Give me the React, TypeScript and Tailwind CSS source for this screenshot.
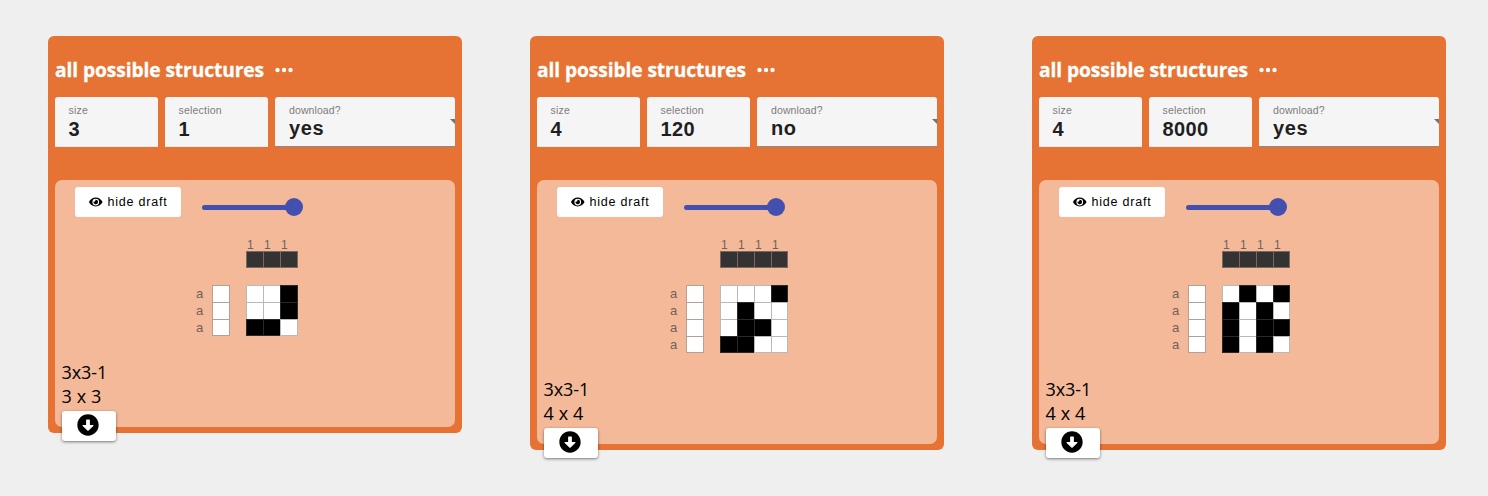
import { FaArrowAltCircleDown, FaEye } from "react-icons/fa";

type Structure = {
  size: number;
  selection: string;
  download: string;
  rows: string[];
};

const structures: Structure[] = [
  { size: 3, selection: "1", download: "yes", rows: ["001", "001", "110"] },
  { size: 4, selection: "120", download: "no", rows: ["0001", "0100", "0110", "1100"] },
  { size: 4, selection: "8000", download: "yes", rows: ["0101", "1010", "1011", "1010"] },
];

function Field({ label, value }: { label: string; value: string }) {
  return (
    <div className="h-[50px] w-[103px] rounded-t-[3px] border-b border-[#f0e8e4] bg-[#f5f5f5] pl-[13.5px] pt-[6px]">
      <div className="h-[14px] text-[10.5px] leading-[14px] tracking-[0.2px] text-[#7c7c7c]">{label}</div>
      <div className="text-[20px] font-bold leading-[24px] tracking-[0.4px] text-[#1f1f1f]">{value}</div>
    </div>
  );
}

function SelectField({ label, value }: { label: string; value: string }) {
  return (
    <div className="flex h-[50px] w-[180px] items-start justify-between overflow-hidden rounded-t-[3px] border-b border-[#8a8a8a] bg-[#f5f5f5] pl-[14px] pt-[6px]">
      <div>
        <div className="h-[14px] text-[10.5px] leading-[14px] tracking-[0.1px] text-[#7c7c7c]">{label}</div>
        <div className="text-[20px] font-bold leading-[22px] tracking-[0.6px] text-[#1f1f1f]">{value}</div>
      </div>
      <svg className="mt-[16px] h-[5px] w-[5px]" viewBox="0 0 5 5">
        <path d="M0 0H5V5Z" fill="#737373" />
      </svg>
    </div>
  );
}

function Draft({ rows }: { rows: string[] }) {
  const n = rows.length;
  return (
    <div className={n === 3 ? "pl-[141px]" : "pl-[133px]"}>
      <div className="flex h-[14px] pl-[50px]">
        {rows.map((_, i) => (
          <span key={i} className="w-[17px] pl-[1px] text-[12px] leading-[16px] text-[#6f625b]">1</span>
        ))}
      </div>
      <div className="flex pl-[50px]">
        {rows.map((_, i) => (
          <span
            key={i}
            className={`-mr-px h-[17px] border border-[#7d675d] bg-[#333333] ${n === 4 && i === 3 ? "w-[17px]" : "w-[18px]"}`}
          />
        ))}
      </div>
      <div className="mt-[17px]">
        {rows.map((row, i) => {
          const height = i === n - 1 ? "h-[17px]" : "h-[18px]";
          return (
            <div key={i} className="flex h-[17px]">
              <span className="w-[16px] text-[13px] leading-[17px] text-[#6f625b]">a</span>
              <span className={`mr-[16px] w-[18px] border border-[#b3a197] bg-white ${height}`} />
              {row.split("").map((cell, j) => (
                <span
                  key={j}
                  className={`-mr-px border ${height} ${n === 4 && j === 3 ? "w-[17px]" : "w-[18px]"} ${
                    cell === "1" ? "border-[#333333]/80 bg-black" : "border-[#a8a8a8]/80 bg-white"
                  }`}
                />
              ))}
            </div>
          );
        })}
      </div>
    </div>
  );
}

function StructureCard({ item }: { item: Structure }) {
  return (
    <section className={`w-[414px] rounded-[6px] bg-[#e67333] px-[7px] ${item.size === 3 ? "h-[397px]" : "h-[414px]"}`}>
      <header className="flex h-[61px] items-center gap-[11px] pt-[7px] text-white">
        <h2 className="w-[209px] whitespace-nowrap font-['Open_Sans',sans-serif] text-[19.2px] font-bold leading-[28px] tracking-[-0.09px] [-webkit-text-stroke:0.3px_white]">
          all possible structures
        </h2>
        <svg className="h-[6px] w-[18px]" viewBox="0 0 18 6" fill="currentColor">
          <circle cx="2.5" cy="3" r="2.2" />
          <circle cx="9" cy="3" r="2.2" />
          <circle cx="15.5" cy="3" r="2.2" />
        </svg>
      </header>
      <div className="flex gap-[7px]">
        <Field label="size" value={String(item.size)} />
        <Field label="selection" value={item.selection} />
        <SelectField label="download?" value={item.download} />
      </div>
      <div className={`mt-[33px] rounded-[7px] bg-[#f4b999] ${item.size === 3 ? "h-[247px]" : "h-[264px]"}`}>
        <div className="flex h-[57px] items-start pl-[20px] pt-[7px]">
          <button className="flex h-[30px] w-[106px] items-center gap-[5px] rounded-[3px] bg-white pl-[14px] text-[12.5px] tracking-[0.8px] text-black">
            <FaEye className="h-[14px] w-[13.5px]" />
            <span className="whitespace-nowrap">hide draft</span>
          </button>
          <div className="ml-[20.5px] mt-[11px] flex h-[18px] items-center">
            <span className="h-[5px] w-[87px] rounded-l-full bg-[#4350af]" />
            <span className="-ml-[4px] h-[18px] w-[18px] rounded-full bg-[#4350af]" />
          </div>
        </div>
        <Draft rows={item.rows} />
        <div className="pl-[6.5px] pt-[24px] font-['Open_Sans',sans-serif] text-[18px] leading-[24px] text-black">
          <div className="tracking-[-0.1px]">3x3-1</div>
          <div className="tracking-[0.1px]">{item.size} x {item.size}</div>
          <button className="mt-[2.5px] flex h-[30px] w-[54px] items-center justify-center rounded-[3px] bg-white pb-[1px] pr-[2px] shadow-[0_1px_3px_rgba(0,0,0,0.5)]">
            <FaArrowAltCircleDown className="h-[22px] w-[22px]" />
          </button>
        </div>
      </div>
    </section>
  );
}

export default function App() {
  return (
    <main className="flex h-[496px] w-[1488px] items-start bg-[#efefef] pl-[48px] pt-[36.4px] font-['Liberation_Sans',sans-serif]">
      <StructureCard item={structures[0]} />
      <div className="w-[68px]" />
      <StructureCard item={structures[1]} />
      <div className="w-[88px]" />
      <StructureCard item={structures[2]} />
    </main>
  );
}
